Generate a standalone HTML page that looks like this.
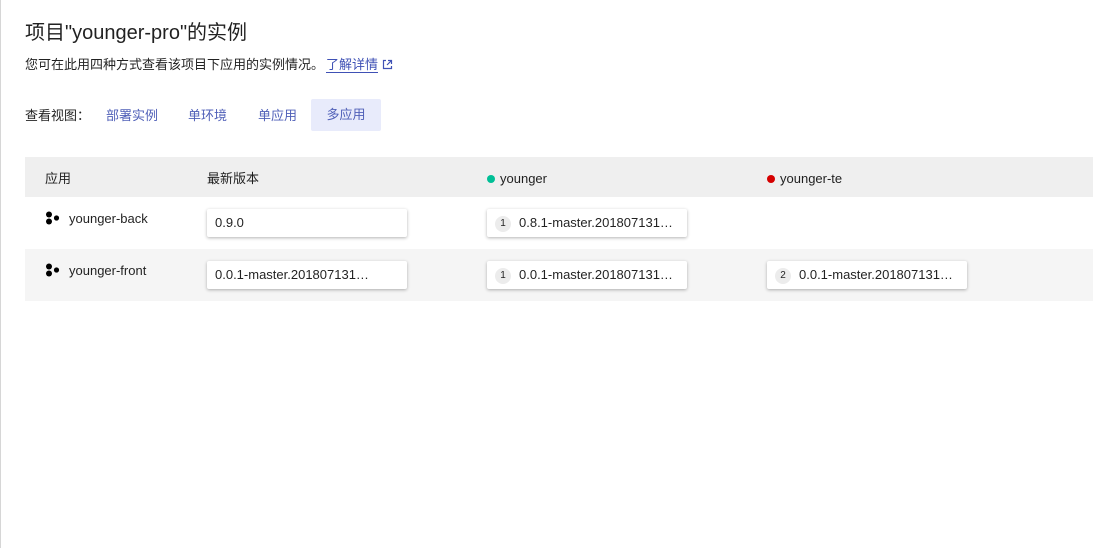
<!DOCTYPE html>
<html><head><meta charset="utf-8"><style>
body{margin:0;width:1112px;height:548px;background:#fff;font-family:"Liberation Sans","Noto Sans CJK SC",sans-serif;color:rgba(0,0,0,.87);position:relative;overflow:hidden}
.a{position:absolute;white-space:nowrap}
.card{position:absolute;width:200px;height:28px;background:#fff;box-shadow:0 1px 3px rgba(0,0,0,.3);border-radius:2px;font-size:13px;line-height:28px;box-sizing:border-box;padding-left:8px}
.n{display:inline-block;width:16px;height:16px;border-radius:50%;background:#ececec;font-size:10px;line-height:16px;text-align:center;margin-right:8px;vertical-align:1px}
.dot{display:inline-block;width:8px;height:8px;border-radius:50%;margin-right:5px}
</style></head><body>
<div class="a" style="left:0;top:0;width:1px;height:548px;background:#d6d6d6"></div>
<div class="a" style="left:25px;top:20px;font-size:20px;line-height:26px">项目"younger-pro"的实例</div>
<div class="a" style="left:25px;top:56px;font-size:13px;line-height:18px">您可在此用四种方式查看该项目下应用的实例情况。<span style="color:#3f51b5;border-bottom:1px solid #3f51b5;margin-left:2px">了解详情</span> <svg width="11" height="11" viewBox="0 0 11 11" style="vertical-align:-1px"><path d="M4 1.5H1.5v8h8V7M6 1.5h3.5V5M9.5 1.5L5 6" fill="none" stroke="#3f51b5" stroke-width="1.2"/></svg></div>
<div class="a" style="left:25px;top:107px;font-size:13px;line-height:18px">查看视图：</div>
<div class="a" style="left:106px;top:107px;font-size:13px;line-height:18px;color:#5060b8">部署实例</div>
<div class="a" style="left:188px;top:107px;font-size:13px;line-height:18px;color:#5060b8">单环境</div>
<div class="a" style="left:258px;top:107px;font-size:13px;line-height:18px;color:#5060b8">单应用</div>
<div class="a" style="left:311px;top:99px;width:70px;height:32px;background:#e8ebfb;border-radius:2px;font-size:13px;line-height:32px;text-align:center;color:#5060b8">多应用</div>
<div class="a" style="left:25px;top:157px;width:1068px;height:40px;background:#efefef"></div>
<div class="a" style="left:25px;top:249px;width:1068px;height:52px;background:#f5f5f5"></div>
<div class="a" style="left:45px;top:170px;font-size:13px;line-height:18px">应用</div>
<div class="a" style="left:207px;top:170px;font-size:13px;line-height:18px">最新版本</div>
<div class="a" style="left:487px;top:170px;font-size:13px;line-height:18px"><span class="dot" style="background:#00bf96"></span>younger</div>
<div class="a" style="left:767px;top:170px;font-size:13px;line-height:18px"><span class="dot" style="background:#d50000"></span>younger-te</div>
<svg class="a" style="left:46px;top:211px" width="14" height="15" viewBox="0 0 14 15"><circle cx="3" cy="3.5" r="3"/><circle cx="3" cy="10.5" r="3"/><circle cx="10.5" cy="7" r="2.6"/></svg>
<div class="a" style="left:69px;top:210px;font-size:13px;line-height:18px">younger-back</div>
<svg class="a" style="left:46px;top:263px" width="14" height="15" viewBox="0 0 14 15"><circle cx="3" cy="3.5" r="3"/><circle cx="3" cy="10.5" r="3"/><circle cx="10.5" cy="7" r="2.6"/></svg>
<div class="a" style="left:69px;top:262px;font-size:13px;line-height:18px">younger-front</div>
<div class="card" style="left:207px;top:209px">0.9.0</div>
<div class="card" style="left:487px;top:209px"><span class="n">1</span>0.8.1-master.201807131…</div>
<div class="card" style="left:207px;top:261px">0.0.1-master.201807131…</div>
<div class="card" style="left:487px;top:261px"><span class="n">1</span>0.0.1-master.201807131…</div>
<div class="card" style="left:767px;top:261px"><span class="n">2</span>0.0.1-master.201807131…</div>
</body></html>
